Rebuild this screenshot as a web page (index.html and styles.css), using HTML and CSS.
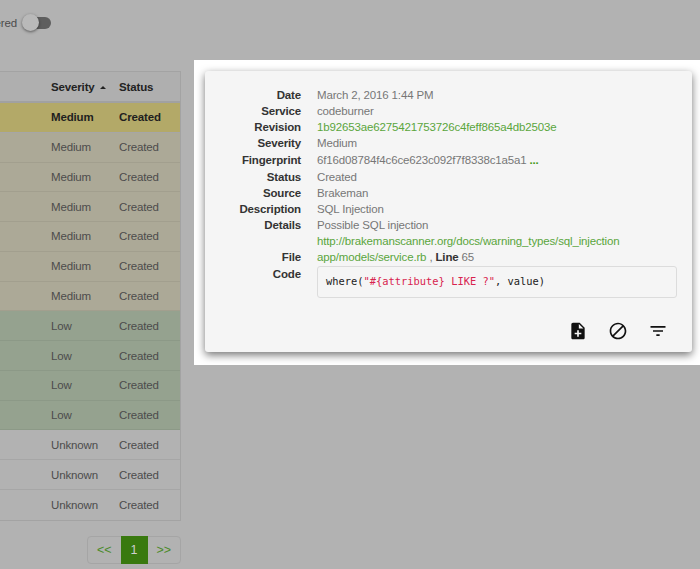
FILE: index.html
```html
<!DOCTYPE html>
<html lang="en">
<head>
    <meta charset="UTF-8">
    <meta name="viewport" content="width=device-width, initial-scale=1.0">
    <title>Finding</title>
    <link rel="stylesheet" href="styles.css">
</head>
<body>
    <div class="page">
        <div class="filter-row">
            <span class="filter-label">Filtered</span>
            <span class="toggle"><span class="toggle-knob"></span></span>
        </div>

        <div class="findings">
            <div class="row head">
                <span></span>
                <span>Severity <i class="sort-arrow"></i></span>
                <span>Status</span>
            </div>
            <div class="row picked"><span></span><span>Medium</span><span>Created</span></div>
            <div class="row medium"><span></span><span>Medium</span><span>Created</span></div>
            <div class="row medium"><span></span><span>Medium</span><span>Created</span></div>
            <div class="row medium"><span></span><span>Medium</span><span>Created</span></div>
            <div class="row medium"><span></span><span>Medium</span><span>Created</span></div>
            <div class="row medium"><span></span><span>Medium</span><span>Created</span></div>
            <div class="row medium"><span></span><span>Medium</span><span>Created</span></div>
            <div class="row low"><span></span><span>Low</span><span>Created</span></div>
            <div class="row low"><span></span><span>Low</span><span>Created</span></div>
            <div class="row low"><span></span><span>Low</span><span>Created</span></div>
            <div class="row low"><span></span><span>Low</span><span>Created</span></div>
            <div class="row"><span></span><span>Unknown</span><span>Created</span></div>
            <div class="row"><span></span><span>Unknown</span><span>Created</span></div>
            <div class="row"><span></span><span>Unknown</span><span>Created</span></div>
        </div>

        <div class="pager">
            <a class="pager-item">&lt;&lt;</a>
            <a class="pager-item active">1</a>
            <a class="pager-item">&gt;&gt;</a>
        </div>
    </div>

    <div class="popup">
        <div class="card">
            <dl class="details">
                <dt>Date</dt><dd>March 2, 2016 1:44 PM</dd>
                <dt>Service</dt><dd>codeburner</dd>
                <dt>Revision</dt><dd><a>1b92653ae6275421753726c4feff865a4db2503e</a></dd>
                <dt>Severity</dt><dd>Medium</dd>
                <dt class="tall">Fingerprint</dt><dd class="tall">6f16d08784f4c6ce623c092f7f8338c1a5a1 <a class="more">...</a></dd>
                <dt>Status</dt><dd>Created</dd>
                <dt>Source</dt><dd>Brakeman</dd>
                <dt>Description</dt><dd>SQL Injection</dd>
                <dt>Details</dt><dd>Possible SQL injection</dd>
                <dt></dt><dd><a>http://brakemanscanner.org/docs/warning_types/sql_injection</a></dd>
                <dt>File</dt><dd><a>app/models/service.rb</a> , <b>Line</b> 65</dd>
                <dt>Code</dt><dd><pre class="code">where(<span class="str">"#{attribute} LIKE ?"</span>, value)</pre></dd>
            </dl>
            <div class="actions">
                <svg class="icon" viewBox="0 0 24 24"><path d="M14 2H6c-1.1 0-1.99.9-1.99 2L4 20c0 1.1.89 2 1.99 2H18c1.1 0 2-.9 2-2V8l-6-6zm2 14h-3v3h-2v-3H8v-2h3v-3h2v3h3v2zm-3-7V3.5L18.5 9H13z"/></svg>
                <svg class="icon" viewBox="0 0 24 24"><path d="M12 2C6.48 2 2 6.48 2 12s4.48 10 10 10 10-4.48 10-10S17.52 2 12 2zM4 12c0-4.42 3.58-8 8-8 1.85 0 3.55.63 4.9 1.69L5.69 16.9C4.63 15.55 4 13.85 4 12zm8 8c-1.85 0-3.55-.63-4.9-1.69L18.31 7.1C19.37 8.45 20 10.15 20 12c0 4.42-3.58 8-8 8z"/></svg>
                <svg class="icon" viewBox="0 0 24 24"><path d="M10 18h4v-2h-4v2zM3 6v2h18V6H3zm3 7h12v-2H6v2z"/></svg>
            </div>
        </div>
    </div>
</body>
</html>
```

FILE: styles.css
```css
html, body {
    margin: 0;
    height: 569px;
    overflow: hidden;
}
body {
    font-family: "Liberation Sans", Arial, sans-serif;
    font-size: 11.5px;
    letter-spacing: -0.15px;
    background: #b2b2b2;
    color: #4c4c4c;
}
.page {
    width: 181px;
    padding-top: 14px;
}

/* toggle */
.filter-row {
    display: flex;
    align-items: center;
    height: 18px;
    margin-bottom: 39px;
    position: relative;
}
.filter-label {
    position: absolute;
    right: 164px;
    white-space: nowrap;
}
.toggle {
    display: block;
    width: 20px;
    height: 12px;
    margin-left: 31px;
    background: #5e5e5e;
    border-radius: 6px;
    position: relative;
}
.toggle-knob {
    position: absolute;
    left: -9px;
    top: -3px;
    width: 17px;
    height: 17px;
    border-radius: 50%;
    background: #b9b9b9;
    box-shadow: 0 1px 3px rgba(0, 0, 0, 0.5);
}

/* table */
.findings {
    border: 1px solid #a3a3a3;
    border-left: none;
}
.row {
    display: grid;
    grid-template-columns: 51px 68px 1fr;
    align-items: center;
    height: 29.78px;
    box-sizing: border-box;
    border-bottom: 1px solid #a6a6a6;
}
.row:last-child { border-bottom: none; }
.head {
    height: 31px;
    background: #afafaf;
    color: #222;
    font-weight: bold;
    border-bottom-width: 2px;
    border-bottom-color: #a1a1a1;
}
.sort-arrow {
    display: inline-block;
    border-left: 3px solid transparent;
    border-right: 3px solid transparent;
    border-bottom: 3px solid #222;
    margin-left: 2px;
    vertical-align: 2px;
}
.picked {
    background: #b3a968;
    color: #1f1f1f;
    font-weight: bold;
}
.medium {
    background: #aca997;
    border-bottom-color: #a29f8e;
}
.low {
    background: #95a28f;
    border-bottom-color: #8c9987;
}

/* pager */
.pager {
    display: flex;
    width: 94px;
    height: 28px;
    margin: 15px 0 0 87px;
    box-sizing: border-box;
    border: 1px solid #a5a5a5;
    border-radius: 4px;
    font-size: 12.5px;
}
.pager-item {
    flex: 1;
    display: flex;
    align-items: center;
    justify-content: center;
    color: #4b8a2a;
}
.pager-item.active {
    flex: none;
    width: 27px;
    margin: -1px 0;
    background: #39790f;
    color: #cfcfcf;
}

/* popup */
.popup {
    position: absolute;
    left: 194px;
    top: 60px;
    width: 506px;
    height: 305px;
    padding: 11px 8px 13px 11px;
    box-sizing: border-box;
    background: #fff;
}
.card {
    height: 100%;
    box-sizing: border-box;
    padding: 16px 15px 0 0;
    background: #f5f5f5;
    border-radius: 3px;
    box-shadow: 0 3px 9px rgba(0, 0, 0, 0.55);
}
.details {
    display: grid;
    grid-template-columns: 96px 1fr;
    column-gap: 16px;
    margin: 0;
    line-height: 16.15px;
}
.details dt {
    text-align: right;
    font-weight: bold;
    color: #333;
}
.details dd {
    margin: 0;
    color: #777;
}
.details .tall { line-height: 17px; }
.details a { color: #5aa53c; }
.details b { color: #333; }
.details a.more {
    color: #3f9a12;
    font-weight: bold;
}
.code {
    margin: 0;
    padding: 6px 8px;
    height: 32px;
    box-sizing: border-box;
    border: 1px solid #dcdcdc;
    border-radius: 3px;
    background: #f5f5f5;
    color: #222;
    font-family: "DejaVu Sans Mono", monospace;
    font-size: 10.4px;
    letter-spacing: 0;
    line-height: 16px;
}
.str { color: #d8234e; }
.actions {
    display: flex;
    justify-content: flex-end;
    gap: 20px;
    margin-top: 23px;
    padding-right: 9px;
}
.icon {
    width: 20px;
    height: 20px;
    fill: #111;
}
```
